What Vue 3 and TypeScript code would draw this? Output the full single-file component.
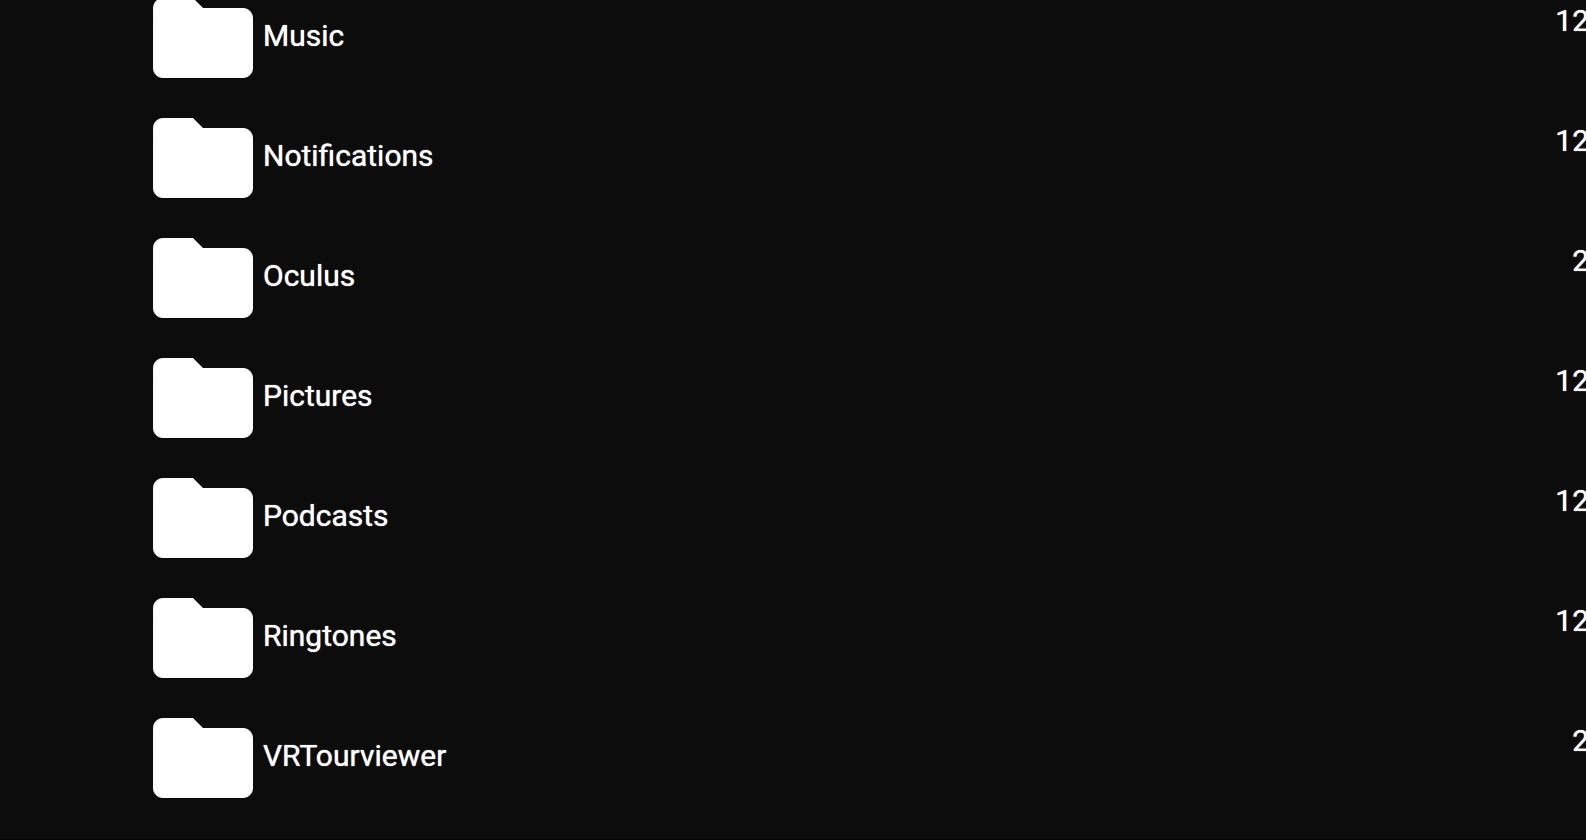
<script setup lang="ts">
interface Folder {
  name: string
  count: number
}

const folders: Folder[] = [
  { name: 'Music', count: 12 },
  { name: 'Notifications', count: 12 },
  { name: 'Oculus', count: 2 },
  { name: 'Pictures', count: 12 },
  { name: 'Podcasts', count: 12 },
  { name: 'Ringtones', count: 12 },
  { name: 'VRTourviewer', count: 2 },
]
</script>

<template>
  <main class="browser">
    <ul class="folders">
      <li v-for="folder in folders" :key="folder.name" class="row">
        <svg class="icon" viewBox="0 0 24 24" aria-hidden="true">
          <path
            d="M10 4H4c-1.1 0-1.99.9-1.99 2L2 18c0 1.1.9 2 2 2h16c1.1 0 2-.9 2-2V8c0-1.1-.9-2-2-2h-8l-2-2z"
          />
        </svg>
        <span class="name">{{ folder.name }}</span>
        <span class="count">{{ folder.count }}</span>
      </li>
    </ul>
  </main>
</template>

<style>
body {
  margin: 0;
  background: #0c0c0c;
}
</style>

<style scoped>
.browser {
  box-sizing: border-box;
  min-height: 100vh;
  overflow: hidden;
  border-bottom: 1px solid #050006;
  background: #0c0c0c;
  color: #fff;
  font-family: Roboto, "Liberation Sans", sans-serif;
  font-size: 30px;
  line-height: 36px;
  text-shadow: 0 0 1px #fff;
}

/* The list is scrolled slightly and runs just past the right edge. */
.folders {
  list-style: none;
  margin: -22px -3px 0 143px;
  padding: 0;
}

.row {
  display: flex;
  height: 120px;
}

.icon {
  flex: none;
  width: 120px;
  height: 120px;
  fill: #fff;
}

.name {
  flex: 1;
  padding-top: 40px;
}

.count {
  padding-top: 25px;
}
</style>
